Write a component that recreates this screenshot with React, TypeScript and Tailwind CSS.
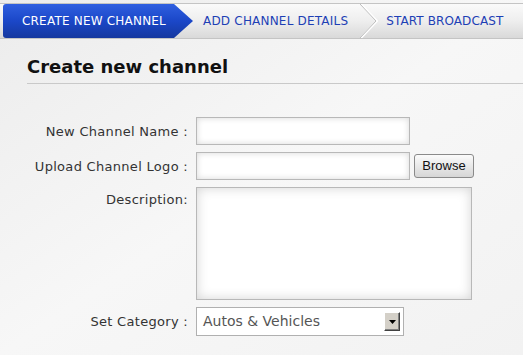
import React from "react";

const font = { fontFamily: '"DejaVu Sans", Verdana, sans-serif' };

export default function App() {
  return (
    <div
      className="w-[523px] h-[355px] overflow-hidden bg-gradient-to-br from-[#ececec] via-[#f7f7f7] to-[#f2f2f2] text-[#222]"
      style={font}
    >
      {/* Step bar */}
      <div className="pt-[3px]">
        <div className="relative flex h-[36px] items-stretch border-y border-[#c4c4c4] bg-gradient-to-b from-[#fafafa] via-[#eeeeee] to-[#d9d9d9]">
          <div className="relative ml-[3px] flex w-[171px] items-center rounded-l-[3px] bg-gradient-to-b from-[#2f5fe0] via-[#1b47c8] to-[#15389f] pl-[19px] text-[12px] tracking-[0.2px] text-white">
            CREATE NEW CHANNEL
            <svg className="absolute left-full top-0" width="20" height="34" viewBox="0 0 20 34">
              <defs>
                <linearGradient id="bg1" x1="0" y1="0" x2="0" y2="1">
                  <stop offset="0" stopColor="#2f5fe0" />
                  <stop offset="0.5" stopColor="#1b47c8" />
                  <stop offset="1" stopColor="#15389f" />
                </linearGradient>
              </defs>
              <polygon points="0,0 19,17 0,34" fill="url(#bg1)" />
            </svg>
          </div>
          <div className="ml-[29px] flex items-center text-[12px] tracking-[0.2px] text-[#1d3fb5]">
            ADD CHANNEL DETAILS
          </div>
          <svg className="ml-[12px] self-stretch" width="18" height="34" viewBox="0 0 18 34">
            <polyline points="1,0 17,17 1,34" fill="none" stroke="#ffffff" strokeWidth="2" />
            <polyline points="0,0 16,17 0,34" fill="none" stroke="#bdbdbd" strokeWidth="1" />
          </svg>
          <div className="ml-[8px] flex items-center text-[12px] tracking-[0.1px] text-[#1d3fb5]">
            START BROADCAST
          </div>
        </div>
      </div>

      {/* Heading */}
      <div className="ml-[27px] mt-[16px] border-b border-[#c9c9c9] pb-[5px]">
        <h1 className="text-[18px] font-bold leading-[23px] text-[#111]">Create new channel</h1>
      </div>

      {/* Form */}
      <div className="mt-[33px] grid grid-cols-[188px_auto] gap-x-[8px] text-[13px] tracking-[0.3px] text-[#333]">
        <div className="flex h-[28px] items-center justify-end pt-[2px]">New Channel Name :</div>
        <div>
          <div className="h-[28px] w-[214px] border border-[#b8b8b8] bg-white shadow-[inset_0_0_6px_#d8d8d8]" />
        </div>

        <div className="mt-[7px] flex h-[28px] items-center justify-end pt-[2px]">Upload Channel Logo :</div>
        <div className="mt-[7px] flex items-center gap-[4px]">
          <div className="h-[28px] w-[214px] border border-[#b8b8b8] bg-white shadow-[inset_0_0_6px_#d8d8d8]" />
          <button
            className="h-[24px] w-[60px] rounded-[3px] border border-[#8a8a8a] bg-gradient-to-b from-[#fbfbfb] to-[#d6d6d6] text-[13px] tracking-normal text-[#111]"
            style={{ fontFamily: '"Liberation Sans", Arial, sans-serif' }}
          >
            Browse
          </button>
        </div>

        <div className="mt-[7px] flex h-[26px] items-center justify-end">Description:</div>
        <div className="mt-[7px]">
          <div className="h-[113px] w-[276px] border border-[#b8b8b8] bg-white shadow-[inset_0_0_12px_#d4d4d4]" />
        </div>

        <div className="mt-[7px] flex h-[29px] items-center justify-end pt-[1px]">Set Category :</div>
        <div className="mt-[7px]">
          <div className="flex h-[29px] w-[208px] items-center justify-between border border-[#b0b0b0] bg-white pl-[6px] pr-[3px]">
            <span className="text-[14px] tracking-normal text-[#555]">Autos &amp; Vehicles</span>
            <div className="flex h-[19px] w-[16px] items-center justify-center border-b border-r border-b-[#404040] border-r-[#404040] border-l border-t border-l-white border-t-white bg-[#d4d0c8] shadow-[inset_-1px_-1px_0_#808080]">
              <svg width="7" height="4" viewBox="0 0 7 4">
                <polygon points="0,0 7,0 3.5,4" fill="#000" />
              </svg>
            </div>
          </div>
        </div>
      </div>
    </div>
  );
}
